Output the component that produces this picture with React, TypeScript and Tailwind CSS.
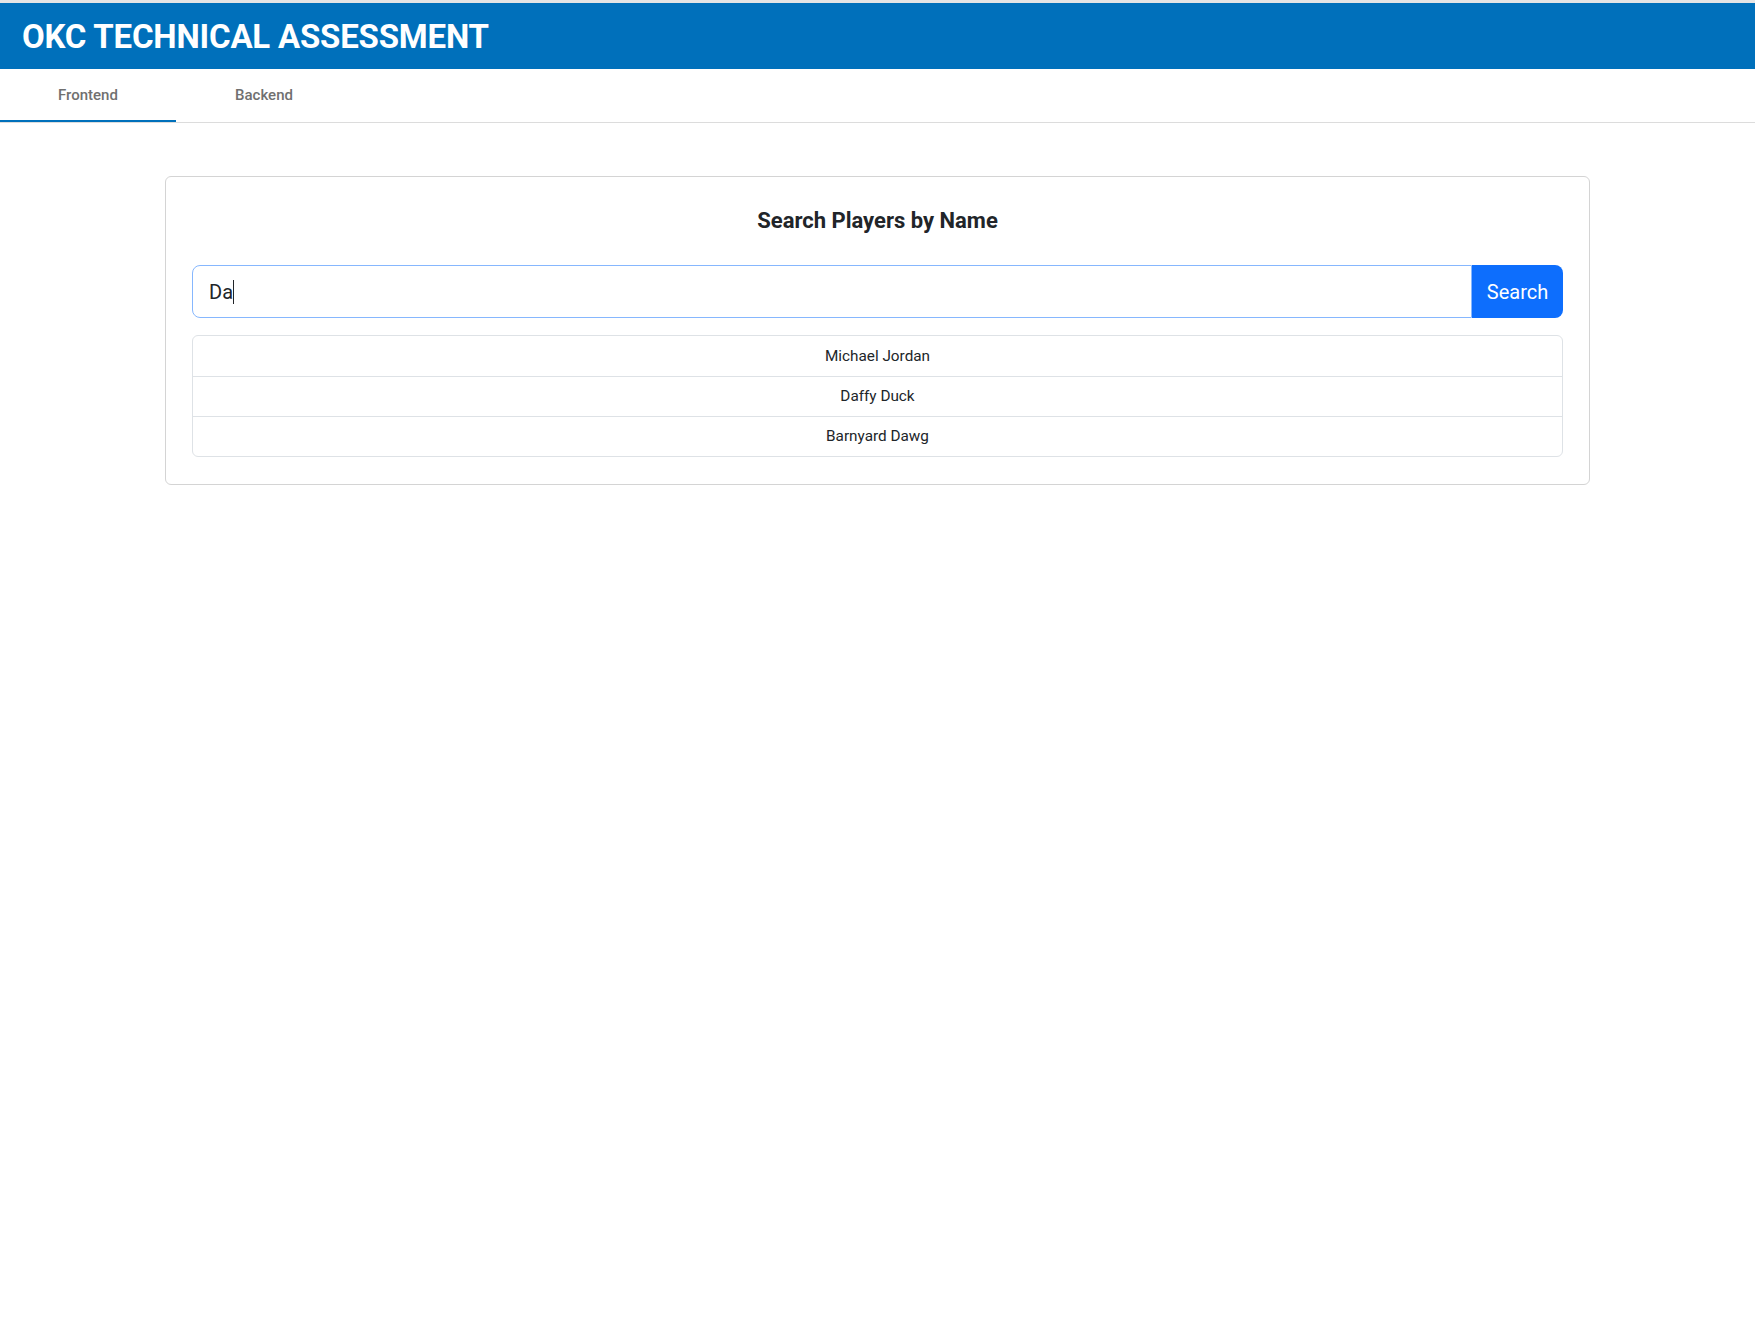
import React from "react";

export default function App() {
  const players = ["Michael Jordan", "Daffy Duck", "Barnyard Dawg"];
  return (
    <div className="min-h-[1321px] bg-white" style={{ fontFamily: "Roboto, 'Liberation Sans', sans-serif" }}>
      <div className="h-[3px] bg-[#e5e5e5]" />
      <header className="h-[66px] bg-[#0070bb] flex items-center pl-[22px]">
        <h1 className="text-[33px] font-bold text-white leading-none tracking-[-0.2px]">OKC TECHNICAL ASSESSMENT</h1>
      </header>
      <nav className="flex border-b border-[#dcdcdc] h-[54px]">
        <div className="w-[176px] flex items-center justify-center pt-[2px] border-b-2 border-[#0070bb] text-[15px] font-medium text-[#707070]">
          Frontend
        </div>
        <div className="w-[176px] flex items-center justify-center pb-[2px] pt-[2px] text-[15px] font-medium text-[#707070]">
          Backend
        </div>
      </nav>
      <main className="pt-[53px]">
        <div className="mx-[165px] border border-[#d4d4d4] rounded-[6px] px-[26px] pt-[24px] pb-[27px]">
          <h2 className="text-center text-[22px] font-bold text-[#212529] leading-[40px]">Search Players by Name</h2>
          <div className="mt-[24px] flex h-[53px]">
            <div className="flex-1 flex items-center border border-[#86b7fe] rounded-l-[8px] px-[16px] text-[20px] text-[#212529]">
              <span>Da</span>
              <span className="inline-block w-[1px] h-[24px] bg-[#212529]" />
            </div>
            <button className="w-[91px] bg-[#0d6efd] text-white text-[20px] rounded-r-[8px]">Search</button>
          </div>
          <ul className="mt-[17px] border border-[#dee2e6] rounded-[6px]">
            {players.map((p, i) => (
              <li
                key={p}
                className={`h-[40px] flex items-center justify-center text-[15.3px] text-[#212529] ${i > 0 ? "border-t border-[#dee2e6]" : ""}`}
              >
                {p}
              </li>
            ))}
          </ul>
        </div>
      </main>
    </div>
  );
}
